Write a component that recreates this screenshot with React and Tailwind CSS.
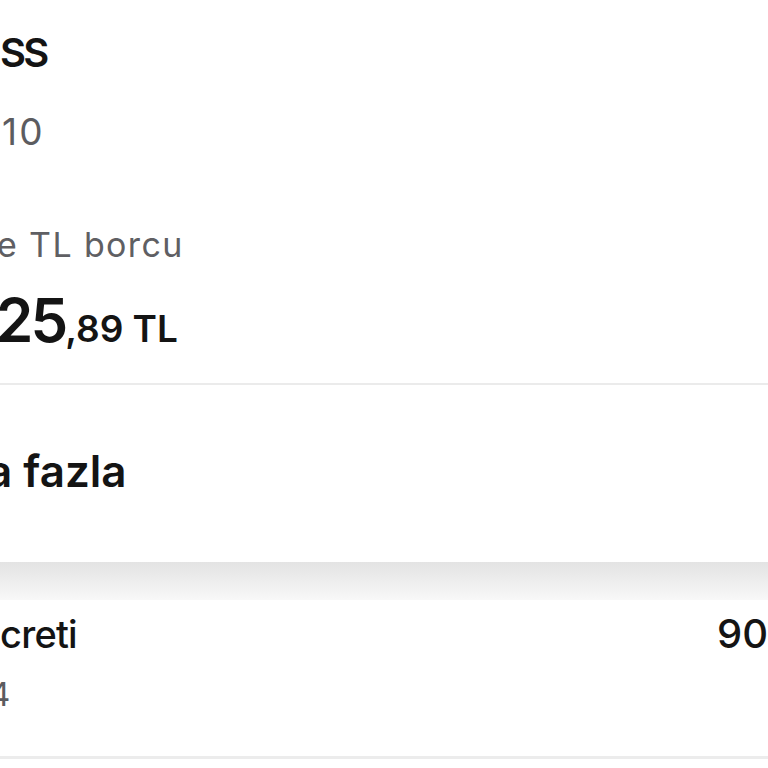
export default function App() {
	return (
		<div className="w-[768px] min-h-[768px] bg-white overflow-hidden font-['Inter',sans-serif] text-[#141414]">
			<div className="flex flex-col border-b-2 border-[#ebebeb]">
				<p className="mt-[33px] text-[40px] leading-none font-semibold tracking-[-0.07em]">SS</p>
				<p className="mt-[40px] ml-[2px] text-[37px] leading-none text-[#5c5c60] tracking-[0.06em]">10</p>
				<p className="mt-[78px] -ml-[3px] text-[34px] leading-none text-[#5f5f63] tracking-[0.04em] whitespace-nowrap">e TL borcu</p>
				<div className="mt-[28px] mb-[33px] -ml-[4px] flex items-baseline leading-none font-semibold">
					<span className="text-[60px] tracking-[-0.05em]">25</span>
					<span className="text-[37px]">,89 TL</span>
				</div>
			</div>

			<div className="h-[177px] flex flex-col">
				<p className="mt-[64px] -ml-[13px] text-[44px] leading-none font-semibold whitespace-nowrap">a fazla</p>
			</div>

			<div className="h-[38px] bg-gradient-to-b from-[#e3e3e3] to-[#f8f8f8]"></div>

			<div className="h-[156px] flex flex-col">
				<div className="mt-[14px] flex justify-between items-baseline leading-none font-medium">
					<span className="text-[38px] tracking-[-0.02em] whitespace-nowrap">creti</span>
					<span className="w-[51px] text-[40px] whitespace-nowrap">90,00 TL</span>
				</div>
				<p className="mt-[24px] -ml-[11px] text-[33px] leading-none text-[#5c5c60]">4</p>
			</div>

			<div className="h-[3px] bg-[#ececec]"></div>
		</div>
	);
}
